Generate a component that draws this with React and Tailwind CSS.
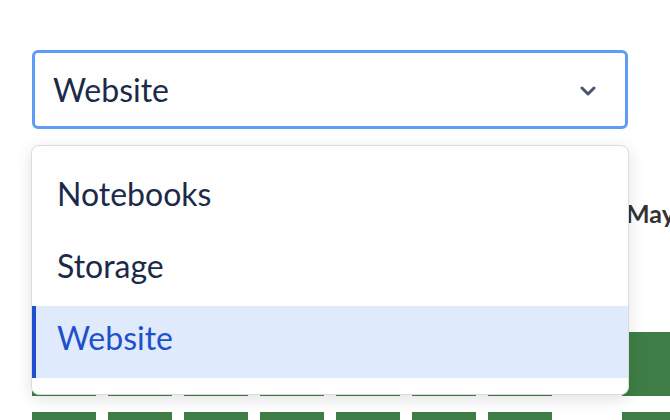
export default function App() {
  const cols = [0, 1, 2, 3, 4, 5, 6];
  const items = ["Notebooks", "Storage", "Website"];
  return (
    <div className="relative h-[420px] w-[670px] overflow-hidden bg-white font-['Lato',sans-serif]">
      <div className="pl-8 pt-[50px]">
        <div className="flex h-[79px] w-[596px] items-center justify-between rounded-md border-[3px] border-[#5e9cf5] pl-[18px] pr-[29px] text-[32px] leading-[40px] text-[#1b2a48]">
          <span>Website</span>
          <svg width="16" height="10" viewBox="0 0 16 10" className="mt-[2px]">
            <path d="M2 2 L8 8 L14 2" fill="none" stroke="#4a5470" strokeWidth="3" strokeLinecap="round" strokeLinejoin="round" />
          </svg>
        </div>
        <div className="mt-[68px] flex">
          <div className="flex flex-col">
            <div className="h-[135px]" />
            <div className="flex flex-col gap-4">
              {[0, 1].map((r) => (
                <div key={r} className="flex gap-3">
                  {cols.map((c) => (
                    <div key={c} className="h-16 w-16 bg-[#3e7e46]" />
                  ))}
                </div>
              ))}
            </div>
          </div>
          <div className="ml-[70px] flex flex-col">
            <div className="h-[135px] pl-1 text-[25px] font-bold leading-[32px] text-[#333333]">May</div>
            <div className="flex flex-col gap-4">
              <div className="h-16 w-16 bg-[#3e7e46]" />
              <div className="h-16 w-16 bg-[#3e7e46]" />
            </div>
          </div>
        </div>
      </div>

      <div className="absolute left-[31px] top-[145px] flex h-[250px] w-[598px] flex-col rounded-lg border border-[#dcdcdc] bg-white pt-4 shadow-[0_4px_16px_rgba(0,0,0,0.12)]">
        {items.map((it) => {
          const sel = it === "Website";
          return (
            <div
              key={it}
              className={
                sel
                  ? "flex h-[72px] items-center border-l-4 border-[#1f4fd0] bg-[#dfeafc] pb-2 pl-[21px] text-[32px] leading-[40px] text-[#1f50cc]"
                  : "flex h-[72px] items-center pb-2 pl-[25px] text-[32px] leading-[40px] text-[#1b2a48]"
              }
            >
              {it}
            </div>
          );
        })}
      </div>
    </div>
  );
}
